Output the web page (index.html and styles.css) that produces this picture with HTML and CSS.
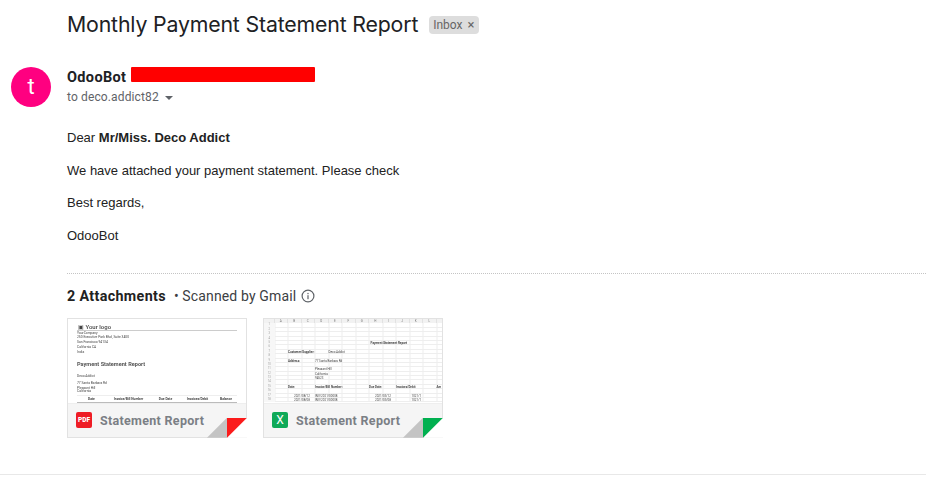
FILE: index.html
```html
<!DOCTYPE html>
<html lang="en">
<head>
    <meta charset="UTF-8">
    <title>Monthly Payment Statement Report</title>
    <link rel="stylesheet" href="styles.css">
</head>
<body>
    <div class="subject">
        <h1>Monthly Payment Statement Report</h1>
        <span class="chip">Inbox <span class="chip-x">×</span></span>
    </div>

    <div class="sender">
        <div class="avatar">t</div>
        <div>
            <div class="sender-line">
                <strong>OdooBot</strong>
                <span class="redacted"></span>
            </div>
            <div class="to-line">to deco.addict82 <span class="caret"></span></div>
        </div>
    </div>

    <div class="message">
        <p>Dear <strong>Mr/Miss. Deco Addict</strong></p>
        <p>We have attached your payment statement. Please check</p>
        <p>Best regards,</p>
        <p>OdooBot</p>
    </div>

    <div class="attachments">
        <div class="attachments-head">
            <strong>2 Attachments</strong>
            <span class="scanned">• Scanned by Gmail</span>
            <svg class="info" viewBox="0 0 14 14" width="14" height="14">
                <circle cx="7" cy="7" r="5.9" fill="none" stroke="#5f6368" stroke-width="1.2"/>
                <rect x="6.4" y="6.2" width="1.2" height="4" fill="#5f6368"/>
                <rect x="6.4" y="3.9" width="1.2" height="1.3" fill="#5f6368"/>
            </svg>
        </div>

        <div class="cards">
            <div class="card">
                <div class="doc">
                    <div class="doc-logo">▣ Your logo</div>
                    <div class="doc-lines">
                        <div>YourCompany</div>
                        <div>250 Executive Park Blvd, Suite 3400</div>
                        <div>San Francisco 94134</div>
                        <div>California CA</div>
                        <div>India</div>
                    </div>
                    <div class="doc-title">Payment Statement Report</div>
                    <div class="doc-address">
                        <div>Deco Addict</div>
                        <div>77 Santa Barbara Rd</div>
                        <div class="tight">Pleasant Hill</div>
                        <div class="tight">California</div>
                    </div>
                    <div class="doc-table">
                        <span>Date</span>
                        <span>Invoice/Bill Number</span>
                        <span>Due Date</span>
                        <span>Invoices/Debit</span>
                        <span>Balance</span>
                    </div>
                </div>
                <div class="band">
                    <span class="file-icon pdf">PDF</span>
                    <span class="file-name">Statement Report</span>
                </div>
                <span class="fold fold-shadow"></span>
                <span class="fold fold-cut"></span>
                <span class="fold fold-red"></span>
            </div>

            <div class="card">
                <div class="sheet">
                    <div class="sheet-head">
                        <span></span><span>A</span><span>B</span><span>C</span><span>D</span><span>E</span><span>F</span><span>G</span><span>H</span><span>I</span><span>J</span><span>K</span><span>L</span>
                    </div>
                    <div class="row"><span class="num">1</span></div>
                    <div class="row"><span class="num">2</span></div>
                    <div class="row"><span class="num">3</span></div>
                    <div class="row"><span class="num">4</span></div>
                    <div class="row"><span class="num">5</span><b class="col-h pad-title">Payment Statement Report</b></div>
                    <div class="row"><span class="num">6</span></div>
                    <div class="row"><span class="num">7</span><b class="col-b">Customer/Supplier:</b><span class="col-e">Deco Addict</span></div>
                    <div class="row"><span class="num">8</span></div>
                    <div class="row"><span class="num">9</span><b class="col-b">Address:</b><span class="col-d">77 Santa Barbara Rd</span></div>
                    <div class="row"><span class="num">10</span></div>
                    <div class="row"><span class="num">11</span><span class="col-d">Pleasant Hill</span></div>
                    <div class="row"><span class="num">12</span><span class="col-d">California</span></div>
                    <div class="row"><span class="num">13</span><span class="col-d">94523</span></div>
                    <div class="row"><span class="num">14</span></div>
                    <div class="row"><span class="num">15</span><b class="col-b">Date:</b><b class="col-d">Invoice/Bill Number:</b><b class="col-h">Due Date:</b><b class="col-j">Invoices/Debit</b><b class="col-m">Am</b></div>
                    <div class="row"><span class="num">16</span></div>
                    <div class="row"><span class="num">17</span><span class="col-b pad-date">2021/08/12</span><span class="col-d">INV/2021/00008</span><span class="col-h pad-date">2021/03/12</span><span class="col-k">1021/1</span></div>
                    <div class="row"><span class="num">18</span><span class="col-b pad-date">2021/08/08</span><span class="col-d">INV/2021/00008</span><span class="col-h pad-date">2021/03/08</span><span class="col-k">1021/1</span></div>
                </div>
                <div class="band">
                    <span class="file-icon xls">X</span>
                    <span class="file-name">Statement Report</span>
                </div>
                <span class="fold fold-shadow"></span>
                <span class="fold fold-cut"></span>
                <span class="fold fold-green"></span>
            </div>
        </div>
    </div>

    <div class="footer-rule"></div>
</body>
</html>
```

FILE: styles.css
```css
html, body {
    margin: 0;
    padding: 0;
    background: #fff;
    overflow: hidden;
}
body {
    height: 477px;
    font-family: "Liberation Sans", Arial, sans-serif;
    color: #222;
}
.subject {
    display: flex;
    align-items: center;
    height: 26px;
    padding: 11px 0 0 67px;
}
.subject h1 {
    margin: 0;
    font-family: "Inter", sans-serif;
    font-size: 21.3px;
    font-weight: 400;
    letter-spacing: -0.17px;
    color: #202124;
}
.chip {
    margin: 2px 0 0 11px;
    padding: 0 5px 0 4px;
    height: 18px;
    line-height: 18px;
    border-radius: 4px;
    background: #ddd;
    color: #666;
    font-family: "Roboto", sans-serif;
    font-size: 12px;
    white-space: nowrap;
}
.chip-x {
    margin-left: 2px;
    font-size: 13px;
}
.sender {
    display: flex;
    margin: 30px 0 0 11px;
}
.avatar {
    width: 40px;
    height: 40px;
    line-height: 40px;
    margin-right: 16px;
    border-radius: 50%;
    background: #ff0080;
    color: #fff;
    font-family: "Roboto", sans-serif;
    font-size: 22px;
    text-align: center;
}
.sender-line {
    display: flex;
    align-items: center;
    height: 20px;
}
.sender-line strong {
    font-family: "Roboto", sans-serif;
    font-size: 14.5px;
    font-weight: 700;
    letter-spacing: 0.35px;
    color: #202124;
}
.redacted {
    width: 184px;
    height: 15px;
    margin: 0 0 6px 5px;
    background: #f00;
    border-radius: 1px;
}
.to-line {
    margin-top: 1px;
    height: 18px;
    line-height: 18px;
    font-family: "Roboto", sans-serif;
    font-size: 12px;
    letter-spacing: 0.13px;
    color: #5f6368;
}
.caret {
    display: inline-block;
    margin-left: 3px;
    vertical-align: middle;
    border-left: 4.5px solid transparent;
    border-right: 4.5px solid transparent;
    border-top: 4px solid #5f6368;
}
.message {
    margin: 23px 0 0 67px;
    font-size: 13px;
    line-height: 15px;
}
.message p {
    margin: 0 0 17.6px 0;
}
.attachments {
    margin: 30px 0 0 67px;
    border-top: 1px dotted #c4c4c4;
}
.attachments-head {
    display: flex;
    align-items: center;
    height: 20px;
    margin-top: 12px;
    font-family: "Roboto", sans-serif;
    font-size: 14px;
    letter-spacing: 0.14px;
    color: #3c4043;
}
.attachments-head strong {
    font-size: 14.3px;
    font-weight: 700;
    letter-spacing: 0.35px;
    color: #222;
}
.scanned {
    margin-left: 8px;
}
.info {
    margin-left: 5px;
}
.cards {
    display: flex;
    gap: 16px;
    margin-top: 12px;
}
.card {
    position: relative;
    width: 178px;
    height: 118px;
    border: 1px solid #e2e2e2;
    display: flex;
    flex-direction: column;
}

/* PDF preview */
.doc {
    flex: 1;
    min-height: 0;
    overflow: hidden;
    padding: 4px 9px 0 9px;
    font-family: "Roboto", sans-serif;
    font-size: 3.3px;
    color: #444;
    filter: blur(0.35px);
}
.doc-logo {
    height: 7px;
    line-height: 7px;
    padding-left: 1px;
    font-size: 6px;
    font-weight: 500;
    color: #444;
    border-bottom: 1px solid #ccc;
}
.doc-lines div {
    height: 4.7px;
    line-height: 4.7px;
}
.doc-title {
    margin-top: 6.5px;
    font-size: 5.6px;
    line-height: 7px;
    font-weight: 700;
    color: #555;
}
.doc-address {
    margin-top: 5px;
}
.doc-address div {
    height: 7px;
    line-height: 7px;
}
.doc-address .tight {
    height: 3px;
    line-height: 3px;
}
.doc-table {
    display: grid;
    grid-template-columns: 29px 45px 29px 35px 22px;
    margin-top: 2px;
    height: 6px;
    line-height: 6px;
    font-weight: 700;
    text-align: center;
    border-top: 1px solid #eee;
    border-bottom: 1px solid #bbb;
}

/* spreadsheet preview */
.sheet {
    flex: 1;
    min-height: 0;
    overflow: hidden;
    font-family: "Roboto", sans-serif;
    font-size: 3px;
    color: #444;
    filter: blur(0.35px);
}
.sheet-head, .row {
    display: grid;
    grid-template-columns: 10.5px repeat(13, 13.5px);
    white-space: nowrap;
}
.sheet-head {
    height: 4.6px;
    line-height: 4.6px;
    text-align: center;
    color: #777;
    background: #f2f2f2;
}
.sheet-head span {
    border-right: 1px solid #e2e2e2;
}
.row {
    height: 4.4px;
    line-height: 4.4px;
    box-sizing: border-box;
    background-image: repeating-linear-gradient(90deg, #eee 0, #eee 0.6px, transparent 0.6px, transparent 13.5px);
    background-position: 10.5px 0;
    border-bottom: 0.5px solid #eee;
}
.num {
    grid-column: 1;
    text-align: center;
    color: #999;
    font-size: 2.6px;
    background: #f7f7f7;
}
.row b { font-weight: 700; }
.col-b { grid-column: 3; }
.col-d { grid-column: 5; }
.col-e { grid-column: 6; }
.col-h { grid-column: 9; }
.col-j { grid-column: 11; }
.col-k { grid-column: 12; padding-left: 2px; }
.col-m { grid-column: 14; }
.pad-date { padding-left: 6px; }
.pad-title { padding-left: 1.5px; }

/* bottom band of the attachment card */
.band {
    display: flex;
    align-items: center;
    flex: none;
    height: 33px;
    padding-left: 8px;
    background: #f5f5f5;
    border-top: 1px solid #eee;
}
.file-icon {
    flex: none;
    width: 16px;
    height: 16px;
    line-height: 16px;
    border-radius: 2px;
    color: #fff;
    font-family: "Roboto", sans-serif;
    font-weight: 900;
    text-align: center;
}
.pdf {
    background: #ee1c25;
    font-size: 6.5px;
}
.xls {
    background: #0fa958;
    font-size: 12px;
    font-weight: 400;
}
.file-name {
    margin-left: 8px;
    font-family: "Roboto", sans-serif;
    font-size: 12.5px;
    font-weight: 700;
    letter-spacing: 0.3px;
    color: #7b7f85;
}

/* folded corner */
.fold {
    position: absolute;
    right: -1px;
    bottom: -1px;
    width: 20px;
    height: 20px;
}
.fold-shadow {
    right: 19px;
    background: #c4c4c4;
    clip-path: polygon(100% 0, 100% 100%, 0 100%);
}
.fold-red {
    background: #fb1b1b;
    clip-path: polygon(0 0, 100% 0, 0 100%);
}
.fold-green {
    background: #00b050;
    clip-path: polygon(0 0, 100% 0, 0 100%);
}
.fold-cut {
    background: #fff;
    clip-path: polygon(100% 0, 100% 100%, 0 100%);
}
.footer-rule {
    margin-top: 36px;
    border-top: 1px solid #e8e8e8;
}
```
